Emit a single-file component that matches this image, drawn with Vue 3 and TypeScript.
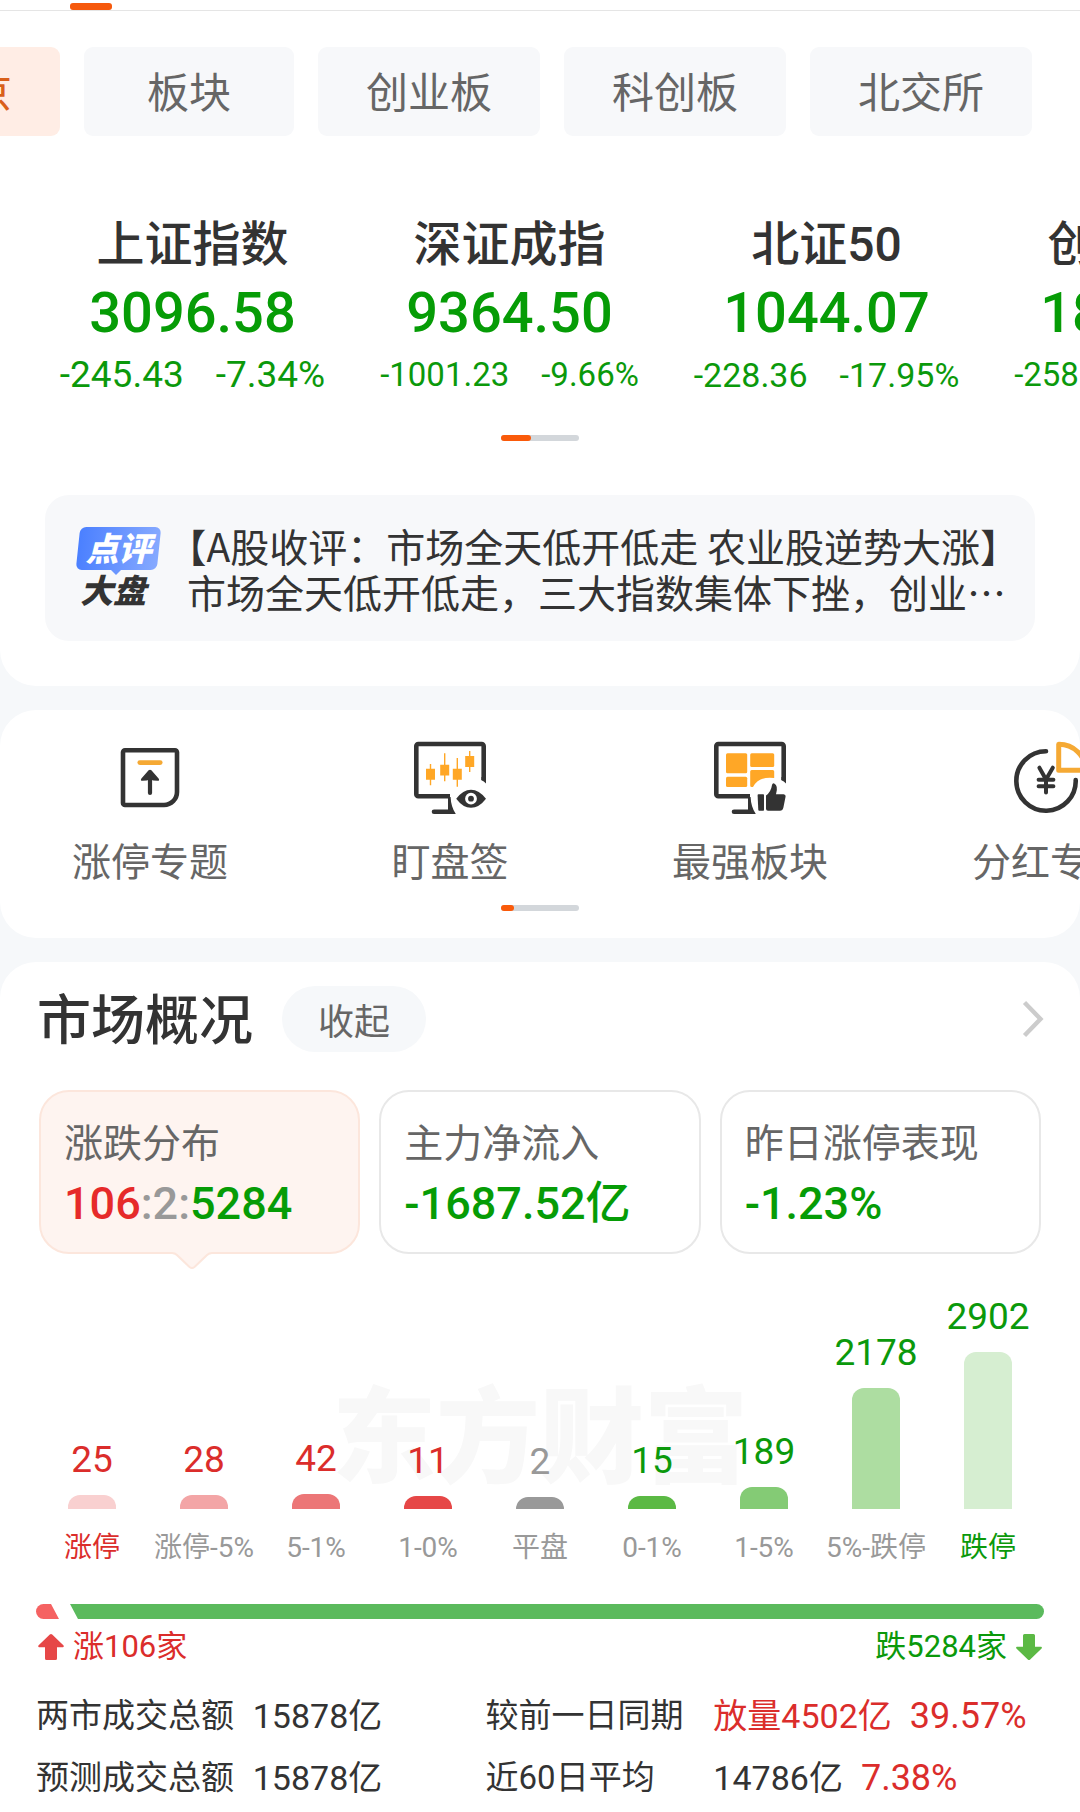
<script setup lang="ts">
interface IndexQuote {
  name: string
  price: string
  change: string
  percent: string
  size: 'lg' | 'md' | 'sm'
}

interface Bucket {
  count: number
  label: string
  height: number
  color: string
  tone: 'up' | 'down' | 'flat'
  strong?: boolean
}

const boards = ['沪深京', '板块', '创业板', '科创板', '北交所']

const quotes: IndexQuote[] = [
  { name: '上证指数', price: '3096.58', change: '-245.43', percent: '-7.34%', size: 'lg' },
  { name: '深证成指', price: '9364.50', change: '-1001.23', percent: '-9.66%', size: 'sm' },
  { name: '北证50', price: '1044.07', change: '-228.36', percent: '-17.95%', size: 'md' },
  { name: '创业板指', price: '1807.21', change: '-258.19', percent: '-12.50%', size: 'sm' },
]

const buckets: Bucket[] = [
  { count: 25, label: '涨停', height: 14, color: '#f9d0d0', tone: 'up', strong: true },
  { count: 28, label: '涨停-5%', height: 14, color: '#f3a5a6', tone: 'up' },
  { count: 42, label: '5-1%', height: 15, color: '#ec7677', tone: 'up' },
  { count: 11, label: '1-0%', height: 13, color: '#e64747', tone: 'up' },
  { count: 2, label: '平盘', height: 12, color: '#999999', tone: 'flat' },
  { count: 15, label: '0-1%', height: 13, color: '#5bb944', tone: 'down' },
  { count: 189, label: '1-5%', height: 22, color: '#84cb75', tone: 'down' },
  { count: 2178, label: '5%-跌停', height: 121, color: '#addda1', tone: 'down' },
  { count: 2902, label: '跌停', height: 157, color: '#d6eed1', tone: 'down', strong: true },
]
</script>

<template>
  <div class="page" lang="zh-CN">
    <section class="card top-card">
      <div class="nav-line"><i class="nav-mark"></i></div>

      <nav class="chips">
        <button
          v-for="(board, i) in boards"
          :key="board"
          type="button"
          class="chip"
          :class="{ active: i === 0, short: board.length === 2 }"
        >{{ board }}</button>
      </nav>

      <div class="quotes">
        <div v-for="q in quotes" :key="q.name" class="quote">
          <div class="quote-name">{{ q.name }}</div>
          <div class="quote-price">{{ q.price }}</div>
          <div class="quote-change" :class="q.size">
            <span>{{ q.change }}</span><span>{{ q.percent }}</span>
          </div>
        </div>
      </div>

      <div class="pager"><i class="pager-wide"></i></div>

      <a class="news" href="#news">
        <span class="badge">
          <span class="badge-top"><b>点评</b></span>
          <span class="badge-bottom">大盘</span>
        </span>
        <span class="news-text">
          <span class="news-line"><span class="half">【</span>A股收评：市场全天低开低走 农业股逆势大涨<span class="half">】</span></span>
          <span class="news-line">市场全天低开低走，三大指数集体下挫，创业⋯</span>
        </span>
      </a>
    </section>

    <section class="card tools-card">
      <div class="tools">
        <a class="tool" href="#limit-up">
          <svg viewBox="0 0 90 90" fill="none" aria-hidden="true">
            <path d="M20 17.3H70a2 2 0 0 1 2 2V59a13 13 0 0 1-13 13H20a2 2 0 0 1-2-2V19.3a2 2 0 0 1 2-2z" stroke="#333" stroke-width="4.6" />
            <path d="M34.8 29.6H55.2" stroke="#f5a934" stroke-width="4.8" stroke-linecap="round" />
            <path d="M45 45V60" stroke="#333" stroke-width="4.2" stroke-linecap="round" />
            <path d="M43.6 37.3Q45 36 46.4 37.3L53.6 45.4Q55 47.6 52.6 47.8Q48 47.6 45 46.4Q42 47.6 37.4 47.8Q35 47.6 36.4 45.4Z" fill="#333" />
          </svg>
          <span>涨停专题</span>
        </a>
        <a class="tool" href="#watch">
          <svg viewBox="0 0 90 90" fill="none" aria-hidden="true">
            <path d="M45 63.3H13.3a2 2 0 0 1-2-2V13a2 2 0 0 1 2-2H76.7a2 2 0 0 1 2 2V47" stroke="#333" stroke-width="4.6" />
            <path d="M76.4 44V47.3Q79 48.3 81 50.6V44z" fill="#333" />
            <path d="M43 64h2.6Q46 74 50.8 81H29a2.2 2.2 0 0 1 0-4.6H43z" fill="#333" />
            <g fill="#ffa726">
              <path d="M21 35.7h9v11h-9zM35.2 31.7h9v10.8h-9zM47.8 35.7h9v11h-9zM60.2 23h9v11h-9z" />
              <path d="M24.8 31h1.4v21.3h-1.4zM39 20.3h1.4v28H39zM51.6 25H53v28.7h-1.4zM64 18h1.4v21H64z" />
            </g>
            <path d="M51.2 65.7Q58 56.7 66 56.7T81 65.7Q74 74.8 66 74.8T51.2 65.7z" fill="#333" />
            <circle cx="66" cy="65.7" r="4.4" stroke="#fff" stroke-width="3" />
          </svg>
          <span>盯盘签</span>
        </a>
        <a class="tool" href="#sectors">
          <svg viewBox="0 0 90 90" fill="none" aria-hidden="true">
            <path d="M45 63.3H13.3a2 2 0 0 1-2-2V13a2 2 0 0 1 2-2H76.7a2 2 0 0 1 2 2V47" stroke="#333" stroke-width="4.6" />
            <path d="M76.4 44V47.3Q79 48.3 81 50.6V44z" fill="#333" />
            <path d="M43 64h2.6Q46 74 50.8 81H29a2.2 2.2 0 0 1 0-4.6H43z" fill="#333" />
            <g fill="#ffa726">
              <rect x="21" y="20.3" width="21.2" height="20" rx="1.5" />
              <rect x="21" y="43.7" width="21.2" height="10.4" rx="1.5" />
              <rect x="45.2" y="20.3" width="24" height="13.8" rx="1.5" />
              <path d="M46.7 37H67.7a1.5 1.5 0 0 1 1.5 1.5V45Q54 43 48 54H46.7a1.5 1.5 0 0 1-1.5-1.5V38.5A1.5 1.5 0 0 1 46.7 37z" />
            </g>
            <path d="M52.6 62q0-.8.8-.8h4.8q.8 0 .8.8v15q0 .8-.8.8h-4q-.8 0-.9-.8z" fill="#333" />
            <path d="M61 62.5Q66 59 67 52Q67.4 50 69.2 50.4Q73.6 52.6 71 61.2H78.6Q80.9 61.4 80.6 63.6L78.4 74.6Q77.6 77.8 75 77.8H63Q61 77.8 61 75.8z" fill="#333" />
          </svg>
          <span>最强板块</span>
        </a>
        <a class="tool" href="#dividend">
          <svg viewBox="0 0 90 90" fill="none" stroke-linecap="round" stroke-linejoin="round" aria-hidden="true">
            <path d="M41 18.3A29.7 29.7 0 1 0 70.7 47" stroke="#333" stroke-width="4.6" />
            <path d="M34.4 34.7L41 46.4L47.8 34.7M41 46.4V59.4M33.6 46.7H48.4M33.6 53.3H48.4" stroke="#333" stroke-width="4" />
            <path d="M53.7 11.3V37.3H81A27 27 0 0 0 53.7 11.3z" stroke="#f5a934" stroke-width="5" />
          </svg>
          <span>分红专题</span>
        </a>
      </div>
      <div class="pager"><i class="pager-small"></i></div>
    </section>

    <section class="card market-card">
      <header class="market-head">
        <h2>市场概况</h2>
        <button type="button" class="fold">收起</button>
        <a class="more" href="#market" aria-label="更多">
          <svg viewBox="0 0 24 40" fill="none" aria-hidden="true">
            <path d="M4.500 3.500L20.500 20L4.500 36.500" stroke="#ccc" stroke-width="4.4" />
          </svg>
        </a>
      </header>

      <div class="stats">
        <button type="button" class="stat selected" aria-pressed="true">
          <span class="stat-label">涨跌分布</span>
          <span class="stat-value"><span class="up">106</span><span class="flat">:2:</span><span>5284</span></span>
          <svg class="tail" viewBox="0 0 40 18" aria-hidden="true">
            <path d="M0 0H40V2Q37 2 35 4L22.500 15.500Q20 17 17.500 15.500L5 4Q3 2 0 2z" fill="#fef4f0" />
            <path d="M0 1Q3 1 5 3L17.500 15Q20 17 22.500 15L35 3Q37 1 40 1" fill="none" stroke="#fce6dc" stroke-width="2" />
          </svg>
        </button>
        <button type="button" class="stat" aria-pressed="false">
          <span class="stat-label">主力净流入</span>
          <span class="stat-value">-1687.52亿</span>
        </button>
        <button type="button" class="stat" aria-pressed="false">
          <span class="stat-label">昨日涨停表现</span>
          <span class="stat-value">-1.23%</span>
        </button>
      </div>

      <div class="chart">
        <div class="watermark">东方财富</div>
        <div v-for="b in buckets" :key="b.label" class="bucket">
          <span class="bucket-count" :class="b.tone">{{ b.count }}</span>
          <i class="bucket-bar" :style="{ height: b.height + 'px', background: b.color }"></i>
          <span class="bucket-label" :class="b.strong ? b.tone : 'flat'">{{ b.label }}</span>
        </div>
      </div>

      <div class="ratio">
        <i class="ratio-up"></i>
        <i class="ratio-down"></i>
      </div>
      <div class="legend">
        <span class="up">
          <svg viewBox="0 0 28 28" aria-hidden="true">
            <path d="M12.800 1.500Q14 .5 15.200 1.500L26.600 12.600Q27.400 14 26 14.200H20V25.500Q20 27 18.500 27H9.500Q8 27 8 25.500V14.200H2Q.6 14 1.400 12.600z" fill="#e64747" />
          </svg>
          涨106家
        </span>
        <span class="down">
          跌5284家
          <svg viewBox="0 0 28 28" aria-hidden="true">
            <path d="M12.800 26.500Q14 27.500 15.200 26.500L26.600 15.400Q27.400 14 26 13.800H20V2.500Q20 1 18.500 1H9.500Q8 1 8 2.500V13.800H2Q.6 14 1.400 15.400z" fill="#5bb944" />
          </svg>
        </span>
      </div>

      <table class="turnover">
        <colgroup><col class="c1"><col class="c2"><col class="c3"><col></colgroup>
        <tbody>
          <tr>
            <th scope="row">两市成交总额</th>
            <td>15878亿</td>
            <th scope="row">较前一日同期</th>
            <td><span class="up">放量4502亿</span><span class="up rate">39.57%</span></td>
          </tr>
          <tr>
            <th scope="row">预测成交总额</th>
            <td>15878亿</td>
            <th scope="row">近60日平均</th>
            <td><span>14786亿</span><span class="up rate">7.38%</span></td>
          </tr>
        </tbody>
      </table>
    </section>
  </div>
</template>

<style>
body {
  background: #f6f8fa;
}
</style>

<style scoped>
.page {
  display: flex;
  flex-direction: column;
  gap: 24px;
  overflow: hidden;
  background: #f6f8fa;
  color: #333;
  font-family: Roboto, "Noto Sans CJK SC", sans-serif;
}

button {
  border: 0;
  margin: 0;
  padding: 0;
  background: none;
  color: inherit;
  font: inherit;
}

a {
  color: inherit;
  text-decoration: none;
}

i {
  display: block;
}

.up {
  color: #db2d2b;
}

.down {
  color: #0b990b;
}

.flat {
  color: #999;
}

.card {
  overflow: hidden;
  border-radius: 36px;
  background: #fff;
}

.top-card {
  border-radius: 0 0 36px 36px;
  padding-bottom: 45px;
}

.nav-line {
  display: flex;
  align-items: flex-end;
  height: 10px;
  padding-left: 70px;
  border-bottom: 1px solid #e5e5e5;
}

.nav-mark {
  width: 42px;
  height: 7px;
  border-radius: 3px;
  background: #f6590c;
}

.chips {
  display: flex;
  gap: 24px;
  margin: 36px 0 0 -162px;
}

.chip {
  flex: none;
  box-sizing: border-box;
  height: 89px;
  padding: 5px 48px 0;
  border-radius: 9px;
  background: #f7f8fa;
  color: #666;
  font-size: 42px;
  line-height: 84px;
  white-space: nowrap;
}

.chip.short {
  padding: 5px 63px 0;
}

.chip.active {
  background: #ffede5;
  color: #d9601a;
}

.quotes {
  display: flex;
  padding: 79px 0 0 34px;
}

.quote {
  flex: 0 0 317px;
  text-align: center;
  white-space: nowrap;
}

.quote-name {
  font-size: 48px;
  font-weight: 500;
  line-height: 60px;
}

.quote-price {
  margin-top: 8px;
  color: #069c06;
  font-size: 56px;
  font-weight: 500;
  line-height: 60px;
}

.quote-change {
  display: flex;
  justify-content: center;
  gap: 32px;
  margin-top: 12px;
  color: #0b990b;
  line-height: 40px;
}

.quote-change.lg {
  font-size: 37px;
}

.quote-change.md {
  font-size: 34px;
}

.quote-change.sm {
  font-size: 33px;
}

.pager {
  width: 78px;
  height: 6px;
  margin: 40px auto 0;
  border-radius: 3px;
  background: #d3d7db;
}

.pager i {
  height: 6px;
  border-radius: 3px;
  background: #fa5a0a;
}

.pager-wide {
  width: 30px;
}

.pager-small {
  width: 13px;
}

.news {
  display: flex;
  align-items: center;
  gap: 26px;
  height: 146px;
  margin: 54px 45px 0;
  padding-left: 31px;
  border-radius: 24px;
  background: #f7f8fa;
}

.badge {
  display: flex;
  flex: none;
  flex-direction: column;
  gap: 5px;
  width: 85px;
  font-size: 33px;
  font-style: italic;
  font-weight: 900;
}

.badge-top {
  position: relative;
  height: 43px;
  color: #fff;
  line-height: 45px;
  text-align: center;
}

.badge-top::before {
  content: "";
  position: absolute;
  inset: 0 2px;
  border-radius: 6px;
  background: linear-gradient(90deg, #4b80ff, #86a9ff);
  transform: skewX(-6deg);
}

.badge-top::after {
  content: "";
  position: absolute;
  top: 43px;
  left: 35px;
  border: 5px solid transparent;
  border-top-color: #6a96ff;
  border-bottom: 0;
}

.badge-top b {
  position: relative;
  font-weight: 900;
}

.badge-bottom {
  padding-left: 4px;
  line-height: 34px;
}

.news-text {
  min-width: 0;
  font-family: "Noto Sans CJK SC", sans-serif;
  font-size: 39px;
  line-height: 46px;
  white-space: nowrap;
}

.news-line {
  display: block;
}

.half {
  font-feature-settings: "halt";
}

.tools-card {
  padding: 23px 0 27px;
}

.tools {
  display: flex;
}

.tool {
  display: flex;
  flex: 0 0 300px;
  flex-direction: column;
  align-items: center;
  gap: 16px;
  color: #666;
  font-size: 39px;
  line-height: 48px;
}

.tool svg {
  width: 90px;
  height: 90px;
}

.tools-card .pager {
  margin-top: 18px;
}

.market-card {
  border-radius: 36px 36px 0 0;
  padding: 24px 36px 10px;
}

.market-head {
  display: flex;
  align-items: center;
  height: 66px;
  padding-left: 1px;
}

.market-head h2 {
  margin: 0;
  padding-top: 6px;
  font-size: 54px;
  font-weight: 500;
  line-height: 60px;
}

.fold {
  width: 144px;
  height: 66px;
  margin-left: 29px;
  border-radius: 33px;
  background: #f6f8fa;
  color: #666;
  font-size: 36px;
}

.more {
  display: flex;
  margin-left: auto;
}

.more svg {
  width: 24px;
  height: 40px;
}

.stats {
  display: flex;
  gap: 19px;
  margin: 38px 3px 0;
}

.stat {
  position: relative;
  display: flex;
  flex: 1 1 0;
  flex-direction: column;
  gap: 8px;
  height: 164px;
  box-sizing: border-box;
  padding: 27px 0 0 23px;
  border: 2px solid #e8e8e8;
  border-radius: 30px;
  text-align: left;
  white-space: nowrap;
}

.stat.selected {
  border-color: #fce6dc;
  background: #fef4f0;
}

.stat-label {
  color: #666;
  font-size: 39px;
  line-height: 50px;
}

.stat-value {
  color: #069c06;
  font-size: 45px;
  font-weight: 500;
  line-height: 54px;
}

.stat-value .up {
  color: #e62a2a;
}

.tail {
  position: absolute;
  top: 160px;
  left: 131px;
  width: 40px;
  height: 18px;
}

.chart {
  position: relative;
  display: flex;
  align-items: flex-end;
  height: 312px;
}

.watermark {
  position: absolute;
  top: 126px;
  left: 0;
  right: 0;
  color: #f8f8f8;
  font-size: 104px;
  font-weight: 900;
  line-height: 120px;
  text-align: center;
}

.bucket {
  position: relative;
  display: flex;
  flex: 1 1 0;
  flex-direction: column;
  align-items: center;
  min-width: 0;
}

.bucket-count {
  font-size: 37px;
  line-height: 40px;
}

.bucket-bar {
  width: 48px;
  margin: 15px 0 21px;
  border-radius: 12px 12px 0 0;
}

.bucket-label {
  font-size: 28px;
  line-height: 36px;
  white-space: nowrap;
}

.ratio {
  display: flex;
  gap: 11px;
  height: 15px;
  margin-top: 38px;
}

.ratio-up {
  width: 23px;
  border-radius: 8px 0 0 8px;
  background: #f56262;
  clip-path: polygon(0 0, 15px 0, 100% 100%, 0 100%);
}

.ratio-down {
  flex: 1;
  border-radius: 0 8px 8px 0;
  background: #5bba5d;
  clip-path: polygon(0 0, 100% 0, 100% 100%, 8px 100%);
}

.legend {
  display: flex;
  justify-content: space-between;
  margin-top: 8px;
  font-size: 31px;
  line-height: 40px;
}

.legend span {
  display: flex;
  align-items: center;
  gap: 8px;
  padding: 0 1px;
}

.legend svg {
  width: 28px;
  height: 28px;
}

.turnover {
  width: 100%;
  margin-top: 25px;
  border-collapse: collapse;
  table-layout: fixed;
  font-size: 33px;
  line-height: 48px;
  white-space: nowrap;
}

.c1 {
  width: 21.5%;
}

.c2 {
  width: 23.1%;
}

.c3 {
  width: 22.6%;
}

.turnover th,
.turnover td {
  padding: 0;
  font-weight: 400;
  text-align: left;
}

.turnover td {
  font-size: 34px;
}

.turnover tr + tr th,
.turnover tr + tr td {
  padding-top: 14px;
}

.turnover .rate {
  margin-left: 18px;
  font-size: 36px;
}
</style>
